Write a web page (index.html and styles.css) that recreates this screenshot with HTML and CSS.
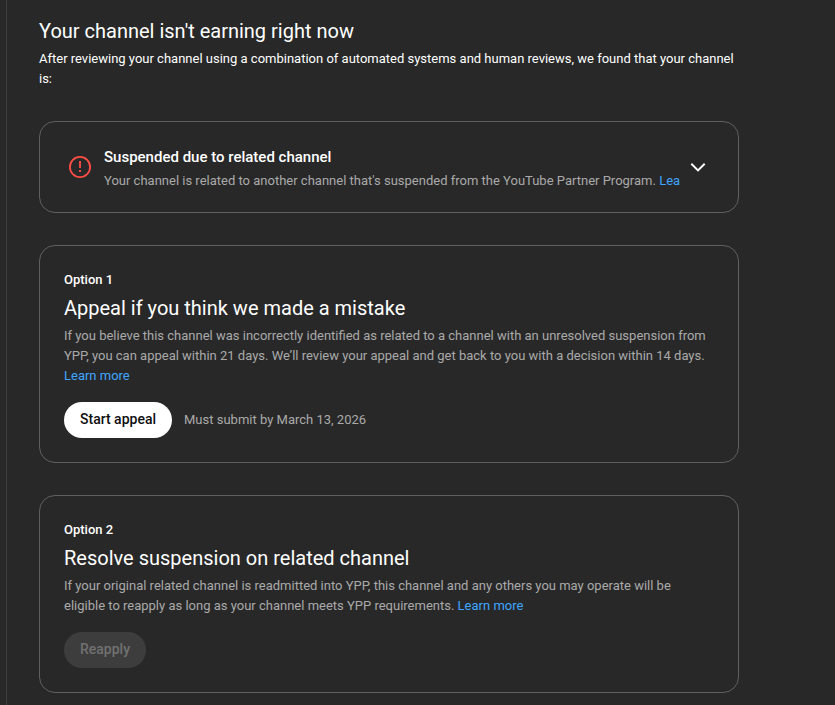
FILE: index.html
```
<!DOCTYPE html>
<html lang="en">

<head>
  <meta charset="UTF-8" />
  <meta name="viewport" content="width=device-width, initial-scale=1.0" />
  <title>Earn</title>
  <link rel="stylesheet" href="styles.css">
</head>

<body>
  <main class="content">
    <h1>Your channel isn't earning right now</h1>
    <p class="intro">After reviewing your channel using a combination of automated systems and human reviews, we found that your channel is:</p>

    <section class="card status">
      <svg class="status-icon" width="24" height="24" viewBox="0 0 24 24" fill="none" stroke="currentColor">
        <circle cx="12" cy="12" r="10.1" stroke-width="1.8" />
        <path d="M12 6v7M12 15v2" stroke-width="1.8" />
      </svg>
      <div class="status-text">
        <h3>Suspended due to related channel</h3>
        <p>Your channel is related to another channel that's suspended from the YouTube Partner Program. <a href="#">Lea</a></p>
      </div>
      <svg class="chevron" width="24" height="24" viewBox="0 0 24 24" fill="none" stroke="currentColor" stroke-width="2">
        <path d="M5.3 8.7L12 15.4l6.7-6.7" />
      </svg>
    </section>

    <section class="card">
      <h4>Option 1</h4>
      <h2>Appeal if you think we made a mistake</h2>
      <p>If you believe this channel was incorrectly identified as related to a channel with an unresolved suspension from YPP, you can appeal within 21 days. We’ll review your appeal and get back to you with a decision within 14 days. <a href="#">Learn more</a></p>
      <div class="actions">
        <button>Start appeal</button>
        <span>Must submit by March 13, 2026</span>
      </div>
    </section>

    <section class="card">
      <h4>Option 2</h4>
      <h2>Resolve suspension on related channel</h2>
      <p>If your original related channel is readmitted into YPP, this channel and any others you may operate will be eligible to reapply as long as your channel meets YPP requirements. <a href="#">Learn more</a></p>
      <div class="actions">
        <button disabled>Reapply</button>
      </div>
    </section>
  </main>
</body>

</html>
```
FILE: styles.css
```
:root {
  --background: #282828;
  --border: #606060;
  --text: #ffffff;
  --text-muted: #aaaaaa;
  --link: #3ea6ff;
  --error: #ff4e45;
}

* {
  box-sizing: border-box;
}

body {
  margin: 0;
  height: 705px;
  overflow: hidden;
  background: var(--background);
  color: var(--text);
  font-family: Roboto, Arial, sans-serif;
  font-size: 13px;
  line-height: 20px;
}

h1,
h2,
h3,
h4,
p {
  margin: 0;
}

a {
  color: var(--link);
  text-decoration: none;
}

.content {
  height: 705px;
  margin-left: 6px;
  padding: 17px 0 0 32px;
  border-left: 1px solid #3e3e3e;
}

h1,
h2 {
  font-size: 20px;
  font-weight: 400;
  line-height: 28px;
}

.intro {
  width: 700px;
  margin: 4px 0 32px;
}

.card {
  width: 700px;
  margin-bottom: 32px;
  padding: 24px;
  border: 1px solid var(--border);
  border-radius: 16px;
}

.card p {
  color: var(--text-muted);
}

.card h4 {
  font-size: 13px;
  font-weight: 500;
}

.card h2 {
  margin: 4px 0;
}

.status {
  display: flex;
  align-items: center;
  height: 92px;
  padding: 0 28px;
}

.status-icon {
  color: var(--error);
}

.status-text {
  flex: 1;
  min-width: 0;
  margin: 2px 6px 0 12px;
}

.status-text h3 {
  margin-bottom: 2px;
  font-size: 15px;
  font-weight: 500;
  line-height: 24px;
}

.status-text p {
  overflow: hidden;
  white-space: nowrap;
}

.actions {
  display: flex;
  align-items: center;
  gap: 12px;
  margin-top: 16px;
  color: var(--text-muted);
}

button {
  height: 36px;
  padding: 0 16px 2px;
  border: none;
  border-radius: 18px;
  background: #ffffff;
  color: #0f0f0f;
  font: 500 14px/34px Roboto, Arial, sans-serif;
}

button:disabled {
  background: #3d3d3d;
  color: #717171;
}
```
